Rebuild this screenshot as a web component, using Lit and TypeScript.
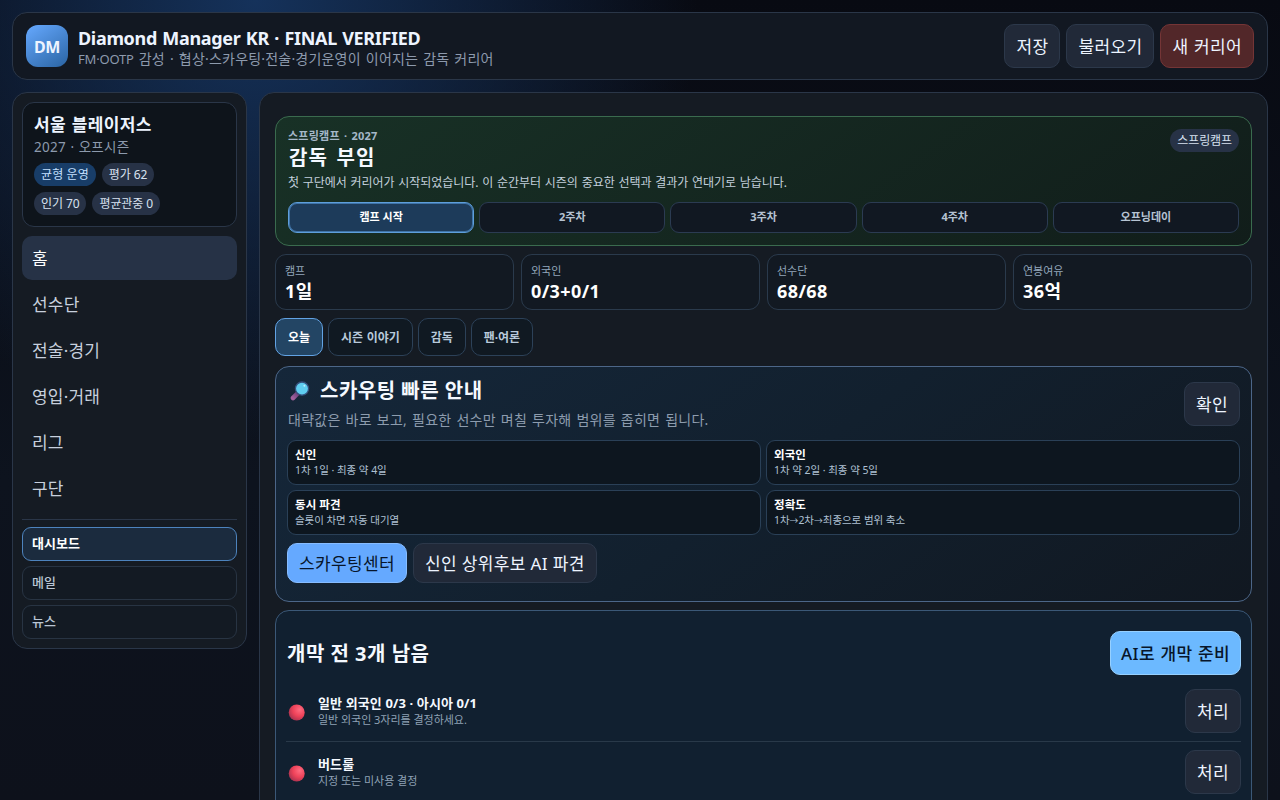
import { LitElement, html, css } from "lit";
import { customElement, state } from "lit/decorators.js";

const NAV = ["홈", "선수단", "전술·경기", "영입·거래", "리그", "구단"];
const SUBNAV = ["대시보드", "메일", "뉴스"];
const WEEKS = ["캠프 시작", "2주차", "3주차", "4주차", "오프닝데이"];
const STATS = [
  ["캠프", "1일"],
  ["외국인", "0/3+0/1"],
  ["선수단", "68/68"],
  ["연봉여유", "36억"],
];
const TABS = ["오늘", "시즌 이야기", "감독", "팬·여론"];
const GUIDE = [
  ["신인", "1차 1일 · 최종 약 4일"],
  ["외국인", "1차 약 2일 · 최종 약 5일"],
  ["동시 파견", "슬롯이 차면 자동 대기열"],
  ["정확도", html`1차<span class="arrow">→</span>2차<span class="arrow">→</span>최종으로 범위 축소`],
];
const TODO = [
  ["일반 외국인 0/3 · 아시아 0/1", "일반 외국인 3자리를 결정하세요."],
  ["버드룰", "지정 또는 미사용 결정"],
];

@customElement("app-root")
export class AppRoot extends LitElement {
  @state() private nav = 0;
  @state() private sub = 0;
  @state() private tab = 0;

  static styles = css`
    :host {
      display: block;
      box-sizing: border-box;
      height: 800px;
      overflow: hidden;
      padding: 12px;
      color: #edf4ff;
      font-family: "Noto Sans", "Noto Sans CJK KR", sans-serif;
      font-size: 16px;
      background:
        radial-gradient(circle at 20% 0%, #15325b 0, transparent 34%),
        linear-gradient(180deg, #080a12 0%, #0d131e 60%, #0d111b 100%);
    }
    *, *::before { box-sizing: border-box; }
    button {
      margin: 0;
      font: inherit;
      color: inherit;
      white-space: nowrap;
      cursor: pointer;
    }
    .header {
      display: flex;
      align-items: center;
      gap: 10px;
      height: 68px;
      padding: 0 13px;
      border: 1px solid #2a3648;
      border-radius: 15px;
      background: #121822;
    }
    .logo {
      display: grid;
      place-items: center;
      width: 42px;
      height: 42px;
      padding-top: 2px;
      border-radius: 12px;
      background: linear-gradient(145deg, #66a9ff, #2a64a3);
      font-weight: 700;
      font-size: 16px;
      letter-spacing: -0.3px;
    }
    .brand { flex: 1; display: grid; padding-top: 4px; }
    .title {
      font-size: 18px;
      line-height: 22px;
      font-weight: 700;
      letter-spacing: -0.32px;
      word-spacing: 1px;
    }
    .tagline {
      color: #8d9aad;
      font-size: 14px;
      line-height: 19px;
      letter-spacing: 0.2px;
      word-spacing: 1.2px;
    }
    .latin { font-size: 13px; letter-spacing: -0.2px; }
    .actions { display: flex; gap: 6px; }
    .btn {
      height: 44px;
      padding: 2px 11px 0;
      border: 1px solid #2c384a;
      border-radius: 10px;
      background: #212938;
      font-size: 17px;
      line-height: 24px;
      letter-spacing: 0.36px;
    }
    .danger { background: #522729; border-color: #743536; word-spacing: 0.8px; }
    .short { height: 40px; }
    .primary { background: #65a9ff; border-color: #86bcff; color: #07152a; }
    .sky {
      padding: 2px 10px 0;
      background: #6cb9ff;
      border-color: #96d0ff;
      color: #07152a;
      font-weight: 500;
      letter-spacing: 0.4px;
      word-spacing: 0.6px;
    }
    .body {
      display: grid;
      grid-template-columns: 235px 1fr;
      align-items: start;
      gap: 12px;
      margin-top: 12px;
    }
    .panel {
      border: 1px solid #2a3648;
      border-radius: 15px;
      background: #151b23;
    }
    .side { padding: 9px; }
    .team {
      height: 125px;
      padding: 11px;
      border: 1px solid #2a3648;
      border-radius: 12px;
      background: #0e141b;
    }
    .team-name { font-size: 17px; line-height: 22px; font-weight: 700; letter-spacing: 0.35px; word-spacing: 1px; }
    .team-sub { color: #8d9aad; font-size: 13.5px; line-height: 20px; letter-spacing: 0.3px; word-spacing: 0.5px; margin-top: 1px; }
    .pills { display: flex; flex-wrap: wrap; gap: 6px; width: 150px; margin-top: 6px; }
    .pill {
      height: 23px;
      padding: 0 7px;
      border-radius: 12px;
      background: #273246;
      color: #d8e2f0;
      font-size: 12px;
      line-height: 24px;
      letter-spacing: -0.1px;
      white-space: nowrap;
    }
    .pill.on { background: #183d68; color: #c4e0ff; letter-spacing: 0.1px; }
    .nav { display: grid; gap: 2px; margin-top: 9px; }
    .nav button {
      height: 44px;
      padding: 2px 10px 0;
      border: 0;
      border-radius: 10px;
      background: none;
      color: #c7d0dd;
      font-size: 17px;
      line-height: 24px;
      letter-spacing: 0.2px;
      text-align: left;
    }
    .nav button.on { background: #263246; color: #fff; }
    .subnav {
      display: grid;
      gap: 5px;
      margin-top: 9px;
      padding-top: 7px;
      border-top: 1px solid #2a3648;
    }
    .subnav button {
      height: 34px;
      padding: 0 9px 2px;
      border: 1px solid #283443;
      border-radius: 9px;
      background: #131a23;
      color: #b9c5d4;
      font-size: 13px;
      line-height: 18px;
      font-weight: 500;
      text-align: left;
    }
    .subnav button.on { background: #1b2b3e; border-color: #4d83bd; color: #fff; font-weight: 700; }
    .main { height: 800px; padding: 23px 15px 0; }
    .hero {
      height: 130px;
      padding: 12px;
      border: 1px solid #3a6b4e;
      border-radius: 14px;
      background: linear-gradient(145deg, #183126, #111d1a);
    }
    .hero-top { display: flex; justify-content: space-between; align-items: flex-start; height: 73px; }
    .eyebrow { color: #a5b7c8; font-size: 11px; line-height: 14px; font-weight: 700; letter-spacing: 0.25px; word-spacing: 1px; }
    .h { font-size: 20px; line-height: 28px; font-weight: 700; letter-spacing: 0.5px; color: #f5f9ff; }
    .hero .h { letter-spacing: 1px; word-spacing: 2.5px; padding: 1px 0 0 1px; }
    .hero-text { color: #c3d0dc; font-size: 12px; line-height: 18px; letter-spacing: -0.04px; word-spacing: 0.7px; margin-top: 2px; }
    .weeks { display: grid; grid-template-columns: repeat(5, 1fr); gap: 5px; }
    .week {
      height: 31px;
      border: 1px solid #2b3b52;
      border-radius: 9px;
      background: #111822;
      color: #b6c3d2;
      font-size: 11px;
      line-height: 28px;
      font-weight: 700;
      text-align: center;
    }
    .week.on { background: #1d3b5a; border-color: #5e9edb; color: #fff; box-shadow: inset 0 0 0 1px #3f74a8; }
    .stats { display: grid; grid-template-columns: repeat(4, 1fr); gap: 7px; margin-top: 8px; }
    .stat {
      height: 56px;
      padding: 8px 9px;
      border: 1px solid #2a3a4c;
      border-radius: 11px;
      background: #121922;
    }
    .stat-label { color: #93a7bb; font-size: 11px; line-height: 16px; }
    .stat-value { font-size: 18px; line-height: 24px; font-weight: 700; letter-spacing: 0.4px; color: #fff; }
    .tabs { display: flex; gap: 5px; margin-top: 8px; }
    .tabs button {
      height: 38px;
      padding: 2px 12px 0;
      border: 1px solid #2c4158;
      border-radius: 10px;
      background: #101922;
      color: #b8c9da;
      font-size: 12px;
      line-height: 18px;
      font-weight: 700;
      letter-spacing: -0.05px;
      word-spacing: 0.7px;
    }
    .tabs button.on { background: #234564; border-color: #62a3e4; color: #fff; }
    .scout {
      height: 236px;
      margin-top: 10px;
      padding: 8px 11px 0;
      border: 1px solid #4c6688;
      border-radius: 14px;
      background: linear-gradient(145deg, #15273a, #12202e 50%, #111821);
    }
    .scout-top { display: flex; justify-content: space-between; height: 65px; }
    .scout-top .btn { margin-top: 7px; }
    .scout-title { display: flex; align-items: center; gap: 10px; padding: 2px 0 0 3px; }
    .scout-title svg { margin-top: 0; }
    .scout-sub {
      color: #8d9cae;
      font-size: 14px;
      line-height: 20px;
      letter-spacing: 0.25px;
      word-spacing: 1.1px;
      margin-top: 5px;
      padding-left: 1px;
    }
    .guide { display: grid; grid-template-columns: 1fr 1fr; gap: 5px; }
    .tip {
      height: 45px;
      padding: 5px 7px;
      border: 1px solid #2a4057;
      border-radius: 9px;
      background: #0d161f;
    }
    .tip-title { font-size: 11.5px; line-height: 17px; font-weight: 700; letter-spacing: 0.05px; color: #fff; }
    .tip-text { color: #adc0d2; font-size: 10.5px; line-height: 14px; letter-spacing: -0.05px; }
    .arrow { font-size: 8.8px; letter-spacing: 0; line-height: 1; }
    .scout-actions { display: flex; gap: 6px; margin-top: 8px; }
    .opening {
      height: 260px;
      margin-top: 8px;
      padding: 20px 10px 0;
      border: 1px solid #3b5877;
      border-radius: 14px;
      background: #112030;
    }
    .opening-top { display: flex; justify-content: space-between; align-items: center; height: 44px; margin-bottom: 6px; }
    .opening-top .h { padding: 1px 0 0 1px; }
    .todo { display: flex; align-items: center; height: 61px; border-bottom: 1px solid #293949; }
    .dot { margin: 2px 13px 0 2px; }
    .todo-body { flex: 1; padding-bottom: 2px; }
    .todo-title { font-size: 13px; line-height: 18px; font-weight: 700; letter-spacing: 0.12px; color: #f5f9ff; }
    .todo-text { color: #8fa2b5; font-size: 11px; line-height: 15px; letter-spacing: -0.03px; }
  `;

  private lens() {
    return html`<svg width="20" height="20" viewBox="0 0 20 20">
      <defs>
        <linearGradient id="grip" x1="0" y1="1" x2="1" y2="0">
          <stop offset="0" stop-color="#a0609c" />
          <stop offset="1" stop-color="#69407a" />
        </linearGradient>
      </defs>
      <path d="M3 17L7.6 12.4" stroke="url(#grip)" stroke-width="4.6" stroke-linecap="round" />
      <circle cx="12" cy="7.6" r="6.6" fill="#5fcdf0" stroke="#36507c" stroke-width="1.3" />
      <circle cx="14.4" cy="4.8" r="1" fill="#b9f0ff" />
    </svg>`;
  }

  private redDot() {
    return html`<svg class="dot" width="17" height="17" viewBox="0 0 17 17">
      <defs>
        <radialGradient id="red" cx="0.68" cy="0.32" r="0.75">
          <stop offset="0" stop-color="#ff6b80" />
          <stop offset="0.55" stop-color="#ee4259" />
          <stop offset="1" stop-color="#a93250" />
        </radialGradient>
      </defs>
      <circle cx="8.7" cy="8.5" r="8" fill="url(#red)" />
    </svg>`;
  }

  render() {
    return html`
      <header class="header">
        <div class="logo">DM</div>
        <div class="brand">
          <div class="title">Diamond Manager KR · FINAL VERIFIED</div>
          <div class="tagline"><span class="latin">FM·OOTP</span> 감성 · 협상·스카우팅·전술·경기운영이 이어지는 감독 커리어</div>
        </div>
        <div class="actions">
          <button class="btn">저장</button>
          <button class="btn">불러오기</button>
          <button class="btn danger">새 커리어</button>
        </div>
      </header>
      <div class="body">
        <aside class="panel side">
          <div class="team">
            <div class="team-name">서울 블레이저스</div>
            <div class="team-sub">2027 · 오프시즌</div>
            <div class="pills">
              <span class="pill on">균형 운영</span>
              <span class="pill">평가 62</span>
              <span class="pill">인기 70</span>
              <span class="pill">평균관중 0</span>
            </div>
          </div>
          <nav class="nav">
            ${NAV.map((n, i) => html`<button class=${i === this.nav ? "on" : ""} @click=${() => (this.nav = i)}>${n}</button>`)}
          </nav>
          <div class="subnav">
            ${SUBNAV.map((n, i) => html`<button class=${i === this.sub ? "on" : ""} @click=${() => (this.sub = i)}>${n}</button>`)}
          </div>
        </aside>
        <main class="panel main">
          <section class="hero">
            <div class="hero-top">
              <div>
                <div class="eyebrow">스프링캠프 · 2027</div>
                <div class="h">감독 부임</div>
                <div class="hero-text">첫 구단에서 커리어가 시작되었습니다. 이 순간부터 시즌의 중요한 선택과 결과가 연대기로 남습니다.</div>
              </div>
              <span class="pill">스프링캠프</span>
            </div>
            <div class="weeks">
              ${WEEKS.map((w, i) => html`<div class="week ${i === 0 ? "on" : ""}">${w}</div>`)}
            </div>
          </section>
          <section class="stats">
            ${STATS.map(([l, v]) => html`<div class="stat"><div class="stat-label">${l}</div><div class="stat-value">${v}</div></div>`)}
          </section>
          <div class="tabs">
            ${TABS.map((t, i) => html`<button class=${i === this.tab ? "on" : ""} @click=${() => (this.tab = i)}>${t}</button>`)}
          </div>
          <section class="scout">
            <div class="scout-top">
              <div>
                <div class="scout-title">${this.lens()}<span class="h">스카우팅 빠른 안내</span></div>
                <div class="scout-sub">대략값은 바로 보고, 필요한 선수만 며칠 투자해 범위를 좁히면 됩니다.</div>
              </div>
              <button class="btn">확인</button>
            </div>
            <div class="guide">
              ${GUIDE.map(([a, b]) => html`<div class="tip"><div class="tip-title">${a}</div><div class="tip-text">${b}</div></div>`)}
            </div>
            <div class="scout-actions">
              <button class="btn short primary">스카우팅센터</button>
              <button class="btn short">신인 상위후보 AI 파견</button>
            </div>
          </section>
          <section class="opening">
            <div class="opening-top">
              <div class="h">개막 전 3개 남음</div>
              <button class="btn sky">AI로 개막 준비</button>
            </div>
            ${TODO.map(([a, b]) => html`<div class="todo">
              ${this.redDot()}
              <div class="todo-body"><div class="todo-title">${a}</div><div class="todo-text">${b}</div></div>
              <button class="btn">처리</button>
            </div>`)}
          </section>
        </main>
      </div>
    `;
  }
}
